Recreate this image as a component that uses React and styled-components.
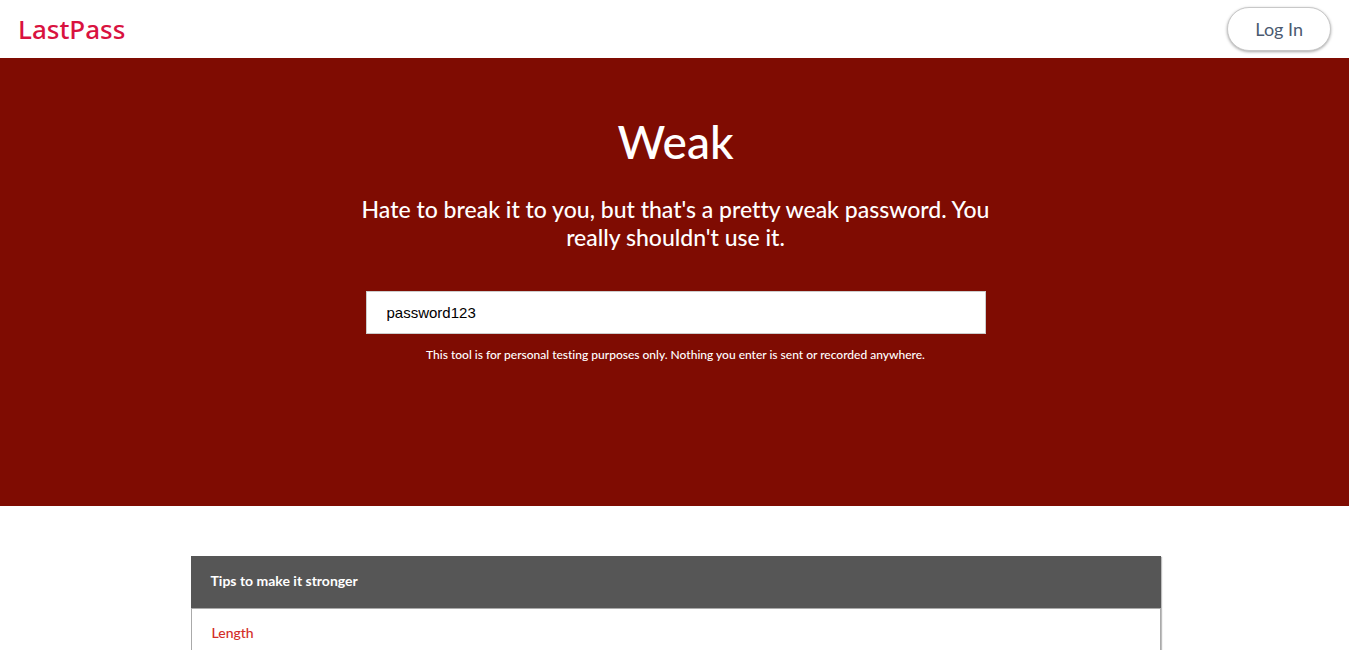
import React, { useState } from "react";
import styled, { createGlobalStyle } from "styled-components";

const GlobalStyle = createGlobalStyle`
  *, *::before, *::after { box-sizing: border-box; }
  body {
    margin: 0;
    background: #fff;
    font-family: Lato, "Open Sans", sans-serif;
    font-weight: 500;
    font-variant-ligatures: none;
  }
`;

const Page = styled.div`
  display: flex;
  flex-direction: column;
  min-height: 100vh;
`;

const Header = styled.header`
  display: flex;
  align-items: center;
  justify-content: space-between;
  height: 58px;
  padding: 0 18px;
  background: #fff;
`;

const Logo = styled.a`
  color: #d9123f;
  font-family: "Noto Sans", sans-serif;
  font-size: 26px;
  font-weight: 500;
  line-height: 32px;
  text-decoration: none;
`;

const LoginButton = styled.button`
  height: 44px;
  padding: 0 27px;
  border: 1px solid #c8c8c8;
  border-radius: 22px;
  background: #fff;
  box-shadow: 0 1px 3px rgba(0, 0, 0, 0.35);
  color: #4b5a70;
  font: 400 18px/24px Lato, sans-serif;
  cursor: pointer;
`;

const Hero = styled.section`
  display: flex;
  flex-direction: column;
  align-items: center;
  min-height: 448px;
  padding: 56px 18px 48px 20px;
  background: #7f0c02;
  color: #fff;
  text-align: center;
`;

const Rating = styled.h1`
  margin: 0 0 25px;
  font-size: 46px;
  font-weight: 500;
  line-height: 56px;
`;

const Verdict = styled.p`
  max-width: 640px;
  margin: 0 0 40px;
  font-size: 23px;
  line-height: 28px;
`;

const PasswordInput = styled.input`
  width: 100%;
  max-width: 620px;
  height: 43px;
  margin-bottom: 13px;
  padding: 0 20px;
  border: 1px solid #ccc;
  border-radius: 0;
  background: #fff;
  color: #000;
  font: 400 15px/20px "Liberation Sans", Arial, sans-serif;
`;

const Note = styled.p`
  margin: 0;
  font-size: 12px;
  line-height: 16px;
`;

const TipsSection = styled.section`
  display: flex;
  flex: 1;
  justify-content: center;
  padding: 50px 18px 0 20px;
`;

const TipsCard = styled.div`
  width: 100%;
  max-width: 970px;
  border: solid #aaa;
  border-width: 0 1px;
  box-shadow: 1px 1px 1px rgba(0, 0, 0, 0.25);
`;

const TipsHeading = styled.h2`
  margin: 0 -1px;
  padding: 14px 20px 17px;
  border-bottom: 1px solid #aaa;
  background: #565656;
  color: #fff;
  font-size: 14px;
  font-weight: 700;
  line-height: 21px;
`;

const TipTitle = styled.h3`
  margin: 0;
  padding: 13px 20px 15px;
  color: #d32d27;
  font-size: 14px;
  font-weight: 500;
  line-height: 21px;
`;

export default function App() {
  const [password, setPassword] = useState("password123");

  return (
    <>
      <GlobalStyle />
      <Page>
        <Header>
          <Logo href="#">LastPass</Logo>
          <LoginButton type="button">Log In</LoginButton>
        </Header>
        <main>
          <Hero>
            <Rating>Weak</Rating>
            <Verdict>
              Hate to break it to you, but that's a pretty weak password. You really shouldn't use it.
            </Verdict>
            <PasswordInput
              type="text"
              aria-label="Password to test"
              value={password}
              onChange={(event) => setPassword(event.target.value)}
            />
            <Note>
              This tool is for personal testing purposes only. Nothing you enter is sent or recorded anywhere.
            </Note>
          </Hero>
        </main>
        <TipsSection>
          <TipsCard>
            <TipsHeading>Tips to make it stronger</TipsHeading>
            <TipTitle>Length</TipTitle>
          </TipsCard>
        </TipsSection>
      </Page>
    </>
  );
}
